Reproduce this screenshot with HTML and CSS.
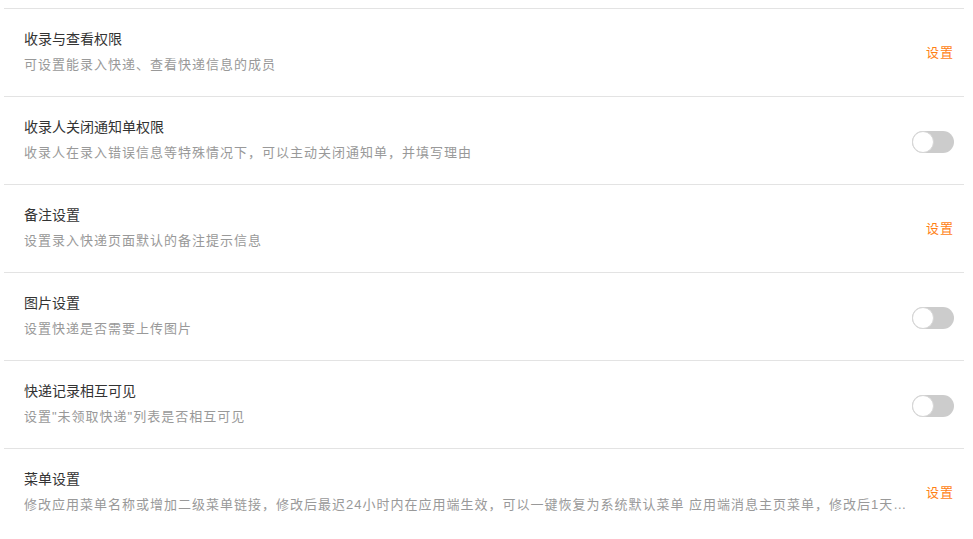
FILE: index.html
```html
<!DOCTYPE html>
<html lang="zh-CN">
<head>
    <meta charset="UTF-8">
    <meta name="viewport" content="width=device-width, initial-scale=1.0">
    <title>设置</title>
    <link rel="stylesheet" href="styles.css">
</head>
<body>
    <div class="settings">
        <div class="row">
            <div class="info">
                <div class="title">收录与查看权限</div>
                <div class="desc">可设置能录入快递、查看快递信息的成员</div>
            </div>
            <a class="action" href="#">设置</a>
        </div>
        <div class="row">
            <div class="info">
                <div class="title">收录人关闭通知单权限</div>
                <div class="desc">收录人在录入错误信息等特殊情况下，可以主动关闭通知单，并填写理由</div>
            </div>
            <span class="switch"><span class="knob"></span></span>
        </div>
        <div class="row">
            <div class="info">
                <div class="title">备注设置</div>
                <div class="desc">设置录入快递页面默认的备注提示信息</div>
            </div>
            <a class="action" href="#">设置</a>
        </div>
        <div class="row">
            <div class="info">
                <div class="title">图片设置</div>
                <div class="desc">设置快递是否需要上传图片</div>
            </div>
            <span class="switch"><span class="knob"></span></span>
        </div>
        <div class="row">
            <div class="info">
                <div class="title">快递记录相互可见</div>
                <div class="desc">设置"未领取快递"列表是否相互可见</div>
            </div>
            <span class="switch"><span class="knob"></span></span>
        </div>
        <div class="row">
            <div class="info">
                <div class="title">菜单设置</div>
                <div class="desc">修改应用菜单名称或增加二级菜单链接，修改后最迟24小时内在应用端生效，可以一键恢复为系统默认菜单 应用端消息主页菜单，修改后1天内在应用端生效，可以一键恢复为系统默认菜单</div>
            </div>
            <a class="action" href="#">设置</a>
        </div>
    </div>
</body>
</html>
```

FILE: styles.css
```css
body {
    margin: 0;
    padding: 8px 0 0 4px;
    font-family: "Liberation Sans", "Noto Sans CJK SC", sans-serif;
    background: #fff;
}
.settings {
    width: 960px;
}
.row {
    display: flex;
    align-items: center;
    height: 87px;
    padding: 0 10px 0 20px;
    border-top: 1px solid #e3e3e3;
}
.info {
    flex: 1;
    min-width: 0;
    margin-right: 16px;
    padding-bottom: 2px;
}
.title {
    font-size: 14px;
    line-height: 20px;
    color: #333;
    margin-bottom: 6px;
}
.desc {
    font-size: 13px;
    line-height: 20px;
    letter-spacing: 1px;
    color: #999;
    white-space: nowrap;
    overflow: hidden;
    text-overflow: ellipsis;
}
.action {
    font-size: 13px;
    letter-spacing: 1px;
    color: #ff7f14;
    text-decoration: none;
    margin-top: -2px;
}
.switch {
    display: block;
    width: 42px;
    height: 22px;
    border-radius: 11px;
    background: #ccc;
    position: relative;
    margin-top: 3px;
}
.knob {
    position: absolute;
    left: 0;
    top: 0;
    width: 20px;
    height: 20px;
    border-radius: 50%;
    background: #fff;
    border: 1px solid #d6d6d6;
}
```
